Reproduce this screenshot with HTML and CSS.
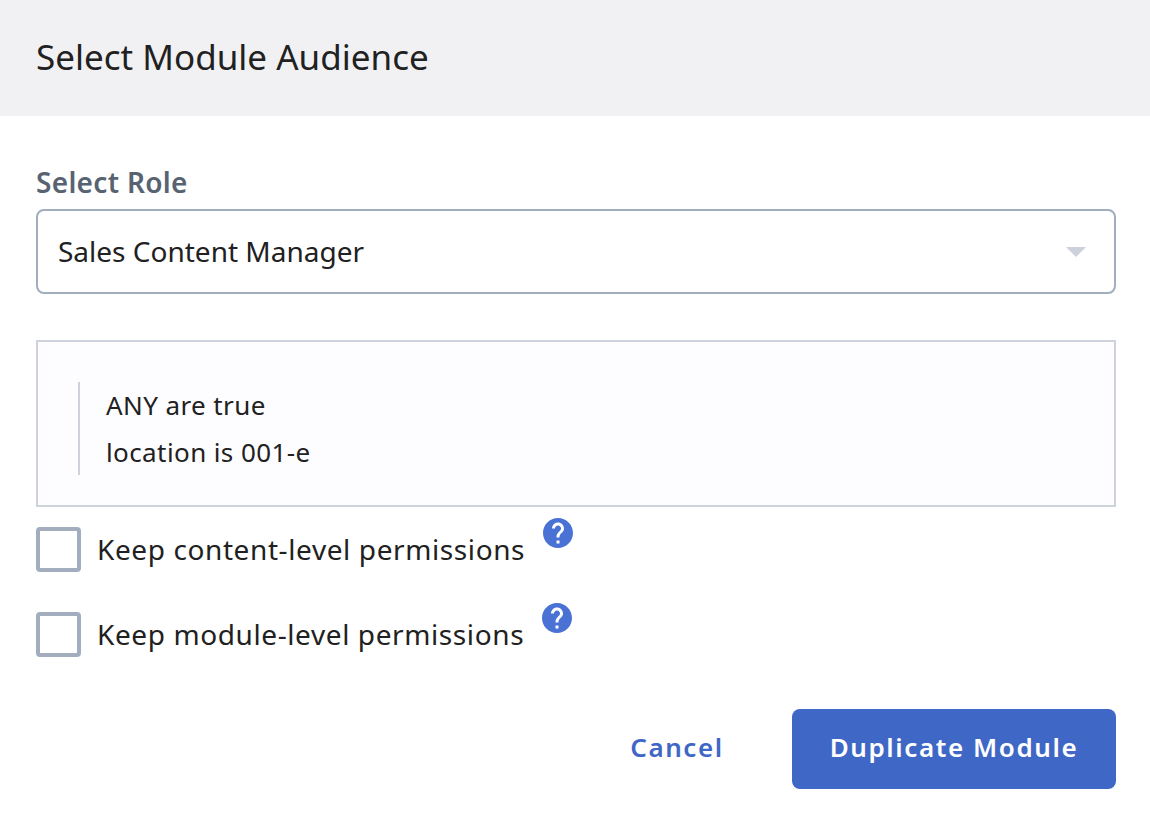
FILE: index.html
```html
<!DOCTYPE html>
<html lang="en">
<head>
  <meta charset="UTF-8">
  <meta name="viewport" content="width=device-width, initial-scale=1.0">
  <title>Select Module Audience</title>
  <link rel="stylesheet" href="styles.css">
</head>
<body>

  <header class="modal-header">
    <h1>Select Module Audience</h1>
  </header>

  <main class="modal-body">
    <div class="field-label" id="role-label">Select Role</div>
    <div class="select" role="combobox" aria-labelledby="role-label" tabindex="0">
      <span>Sales Content Manager</span>
      <svg class="arrow" width="20" height="10" viewBox="0 0 20 10">
        <path d="M0 0h20L10 10z"/>
      </svg>
    </div>

    <div class="rules">
      <div class="rule-group">
        <div>ANY are true</div>
        <div>location is 001-e</div>
      </div>
    </div>

    <div class="option">
      <label><input type="checkbox"><span>Keep content-level permissions</span></label>
      <svg class="help" width="30" height="30" viewBox="2 2 20 20">
        <path d="M12 2C6.48 2 2 6.48 2 12s4.480 10 10 10 10-4.480 10-10S17.520 2 12 2zm1 17h-2v-2h2v2zm2.070-7.750l-.9.920C13.450 12.900 13 13.500 13 15h-2v-.5c0-1.100.45-2.100 1.170-2.830l1.240-1.260c.37-.36.59-.86.59-1.410 0-1.100-.9-2-2-2s-2 .9-2 2H8c0-2.210 1.790-4 4-4s4 1.790 4 4c0 .88-.36 1.680-.93 2.250z"/>
      </svg>
    </div>
    <div class="option">
      <label><input type="checkbox"><span>Keep module-level permissions</span></label>
      <svg class="help" width="30" height="30" viewBox="2 2 20 20">
        <path d="M12 2C6.48 2 2 6.48 2 12s4.480 10 10 10 10-4.480 10-10S17.520 2 12 2zm1 17h-2v-2h2v2zm2.070-7.750l-.9.920C13.450 12.900 13 13.500 13 15h-2v-.5c0-1.100.45-2.100 1.170-2.830l1.240-1.260c.37-.36.59-.86.59-1.410 0-1.100-.9-2-2-2s-2 .9-2 2H8c0-2.210 1.790-4 4-4s4 1.790 4 4c0 .88-.36 1.680-.93 2.250z"/>
      </svg>
    </div>
  </main>

  <footer class="modal-footer">
    <button class="cancel-button">Cancel</button>
    <button class="primary-button">Duplicate Module</button>
  </footer>

</body>
</html>
```

FILE: styles.css
```css
* {
  box-sizing: border-box;
}

body {
  margin: 0;
  background: #fff;
  color: #212121;
  font-family: "Noto Sans", sans-serif;
  font-size: 28px;
}

.modal-header {
  height: 116px;
  padding: 0 36px 3px;
  background: #f1f1f4;
  display: flex;
  align-items: center;
}

.modal-header h1 {
  margin: 0;
  font-size: 35px;
  font-weight: 400;
}

.modal-body {
  padding: 48px 34px 0 36px;
}

.field-label {
  height: 45px;
  line-height: 36px;
  color: #586372;
  font-weight: 600;
  letter-spacing: 0.3px;
}

.select {
  height: 85px;
  padding: 0 28px 0 20px;
  border: 2px solid #a2aebd;
  border-radius: 8px;
  display: flex;
  justify-content: space-between;
  align-items: center;
}

.select span {
  padding-bottom: 2px;
}

.arrow {
  fill: #ccd1db;
}

.rules {
  height: 167px;
  margin: 46px 0 20px;
  padding: 40px;
  border: 2px solid #cdd2dd;
  background: #fdfdff;
}

.rule-group {
  height: 93px;
  padding-left: 26px;
  border-left: 2px solid #cdd2dd;
  font-size: 26px;
  line-height: 47px;
  letter-spacing: 0.4px;
}

.option {
  height: 45px;
  margin-bottom: 40px;
  display: flex;
  gap: 17.6px;
}

.option label {
  display: flex;
  align-items: center;
  gap: 16px;
  letter-spacing: 0.6px;
}

.option label span {
  padding-bottom: 2px;
}

.option input {
  appearance: none;
  width: 45px;
  height: 45px;
  margin: 0;
  border: 4px solid #a2aebd;
  border-radius: 4px;
  background: #fff;
}

.help {
  margin-top: -9px;
  fill: #4a72d4;
}

.modal-footer {
  margin-top: 52px;
  padding-right: 34px;
  display: flex;
  justify-content: flex-end;
  gap: 30px;
}

.modal-footer button {
  height: 80px;
  padding-bottom: 6px;
  border: none;
  border-radius: 8px;
  font-family: inherit;
  font-size: 26px;
  font-weight: 600;
  letter-spacing: 1.6px;
  cursor: pointer;
}

.cancel-button {
  width: 170px;
  background: none;
  color: #3f67c6;
}

.primary-button {
  width: 324px;
  background: #3f67c6;
  color: #fff;
}
```
